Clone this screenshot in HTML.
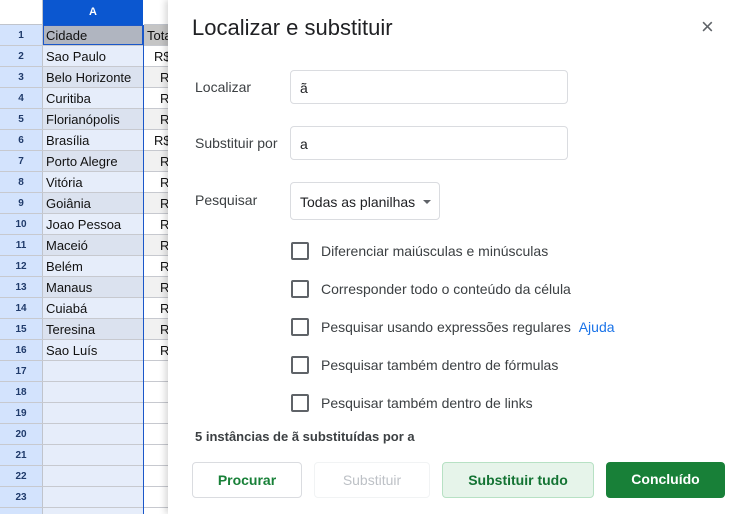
<!DOCTYPE html>
<html style="height:514px;overflow:hidden"><head><meta charset="utf-8"><style>
html,body{height:514px;overflow:hidden}
body{margin:0;width:747px;background:#fff;font-family:"Liberation Sans",Arial,sans-serif;position:relative}
.hdr{position:absolute;top:0;height:25px}
.row{position:absolute;left:0;height:20px;border-bottom:1px solid #c7c9cf;width:170px}
.rn{position:absolute;left:0;top:0;width:42px;height:20px;background:#d3e3fd;border-right:1px solid #c0c4cc;font-size:10px;font-weight:bold;color:#1f3a6a;text-align:center;line-height:21px}
.ca{position:absolute;left:43px;top:0;width:100px;height:20px;font-size:13px;line-height:22px;color:#111;padding-left:3px;box-sizing:border-box}
.o .ca{background:#dbe2ef}
.cb{position:absolute;left:144px;top:0;width:26px;height:20px;font-size:13px;line-height:22px;color:#111;padding-left:16px;box-sizing:border-box;overflow:hidden}
.o .cb{background:#f1f1f1}
.r .cb{padding-left:10px}
.dlg{position:absolute;left:168px;top:0;width:579px;height:514px;background:#fff;box-shadow:-3px 0 6px rgba(0,0,0,.15)}
.t{position:absolute;color:#3c4043;font-size:14px}
.in{position:absolute;left:122px;width:278px;height:34px;border:1px solid #dadce0;border-radius:4px;box-sizing:border-box;font-size:14px;padding:9px 0 0 9px;color:#202124}
.cbx{position:absolute;left:123px;width:14px;height:14px;border:2px solid #5f6368;border-radius:2px}
.btn{position:absolute;top:462px;height:36px;border-radius:4px;box-sizing:border-box;font-size:14px;font-weight:bold;text-align:center;line-height:34px}
</style></head><body>
<div class="hdr" style="left:0;width:42px;background:#fff;border-right:1px solid #c0c4cc;border-bottom:1px solid #c0c4cc;height:24px"></div>
<div class="hdr" style="left:43px;width:100px;background:#0b57d0;color:#fff;font-size:11px;font-weight:bold;text-align:center;line-height:24px">A</div>
<div class="hdr" style="left:144px;width:26px;background:#fff;border-bottom:1px solid #c0c4cc;height:24px"></div>
<div style="position:absolute;left:43px;top:25px;width:100px;height:489px;background:#e6edfa"></div>
<div style="position:absolute;left:143px;top:25px;width:1px;height:489px;background:#1a57c9;z-index:2"></div>

<div class="row" style="top:25px"><div class="rn">1</div><div class="ca" style="background:#b0b5c0;border:1px solid #1a57c9;line-height:20px;padding-left:2px">Cidade</div><div class="cb" style="background:#c5c5c5;padding-left:3px">Total</div></div>
<div class="row r" style="top:46px"><div class="rn">2</div><div class="ca">Sao Paulo</div><div class="cb">R$</div></div>
<div class="row o" style="top:67px"><div class="rn">3</div><div class="ca">Belo Horizonte</div><div class="cb">R</div></div>
<div class="row" style="top:88px"><div class="rn">4</div><div class="ca">Curitiba</div><div class="cb">R</div></div>
<div class="row o" style="top:109px"><div class="rn">5</div><div class="ca">Florianópolis</div><div class="cb">R</div></div>
<div class="row r" style="top:130px"><div class="rn">6</div><div class="ca">Brasília</div><div class="cb">R$</div></div>
<div class="row o" style="top:151px"><div class="rn">7</div><div class="ca">Porto Alegre</div><div class="cb">R</div></div>
<div class="row" style="top:172px"><div class="rn">8</div><div class="ca">Vitória</div><div class="cb">R</div></div>
<div class="row o" style="top:193px"><div class="rn">9</div><div class="ca">Goiânia</div><div class="cb">R</div></div>
<div class="row" style="top:214px"><div class="rn">10</div><div class="ca">Joao Pessoa</div><div class="cb">R</div></div>
<div class="row o" style="top:235px"><div class="rn">11</div><div class="ca">Maceió</div><div class="cb">R</div></div>
<div class="row" style="top:256px"><div class="rn">12</div><div class="ca">Belém</div><div class="cb">R</div></div>
<div class="row o" style="top:277px"><div class="rn">13</div><div class="ca">Manaus</div><div class="cb">R</div></div>
<div class="row" style="top:298px"><div class="rn">14</div><div class="ca">Cuiabá</div><div class="cb">R</div></div>
<div class="row o" style="top:319px"><div class="rn">15</div><div class="ca">Teresina</div><div class="cb">R</div></div>
<div class="row" style="top:340px"><div class="rn">16</div><div class="ca">Sao Luís</div><div class="cb">R</div></div>
<div class="row" style="top:361px"><div class="rn">17</div></div>
<div class="row" style="top:382px"><div class="rn">18</div></div>
<div class="row" style="top:403px"><div class="rn">19</div></div>
<div class="row" style="top:424px"><div class="rn">20</div></div>
<div class="row" style="top:445px"><div class="rn">21</div></div>
<div class="row" style="top:466px"><div class="rn">22</div></div>
<div class="row" style="top:487px"><div class="rn">23</div></div>
<div class="row" style="top:508px;height:6px;overflow:hidden"><div class="rn">24</div></div>

<div class="dlg">
<div class="t" style="left:24px;top:15px;font-size:22px;color:#202124">Localizar e substituir</div>
<div class="t" style="left:533px;top:14px;font-size:22px;color:#5f6368">×</div>
<div class="t" style="left:27px;top:79px">Localizar</div>
<div class="in" style="top:70px">ã</div>
<div class="t" style="left:27px;top:135px">Substituir por</div>
<div class="in" style="top:126px">a</div>
<div class="t" style="left:27px;top:192px">Pesquisar</div>
<div class="in" style="top:182px;width:150px;height:38px;padding-top:11px;color:#202124">Todas as planilhas <span style="position:absolute;right:8px;top:17px;border-left:4px solid transparent;border-right:4px solid transparent;border-top:4px solid #5f6368"></span></div>
<div class="cbx" style="top:242px"></div><div class="t" style="left:153px;top:243px">Diferenciar maiúsculas e minúsculas</div>
<div class="cbx" style="top:280px"></div><div class="t" style="left:153px;top:281px">Corresponder todo o conteúdo da célula</div>
<div class="cbx" style="top:318px"></div><div class="t" style="left:153px;top:319px">Pesquisar usando expressões regulares <span style="color:#1a73e8;margin-left:4px">Ajuda</span></div>
<div class="cbx" style="top:356px"></div><div class="t" style="left:153px;top:357px">Pesquisar também dentro de fórmulas</div>
<div class="cbx" style="top:394px"></div><div class="t" style="left:153px;top:395px">Pesquisar também dentro de links</div>
<div class="t" style="left:27px;top:429px;font-size:13px;font-weight:bold">5 instâncias de ã substituídas por a</div>
<div class="btn" style="left:24px;width:110px;border:1px solid #dadce0;color:#188038">Procurar</div>
<div class="btn" style="left:146px;width:116px;border:1px solid #f1f3f4;color:#bdc1c6;font-weight:normal">Substituir</div>
<div class="btn" style="left:274px;width:152px;border:1px solid #b7e1c4;background:#e6f4ea;color:#137333">Substituir tudo</div>
<div class="btn" style="left:438px;width:119px;background:#188038;color:#fff">Concluído</div>
</div>
</body></html>
